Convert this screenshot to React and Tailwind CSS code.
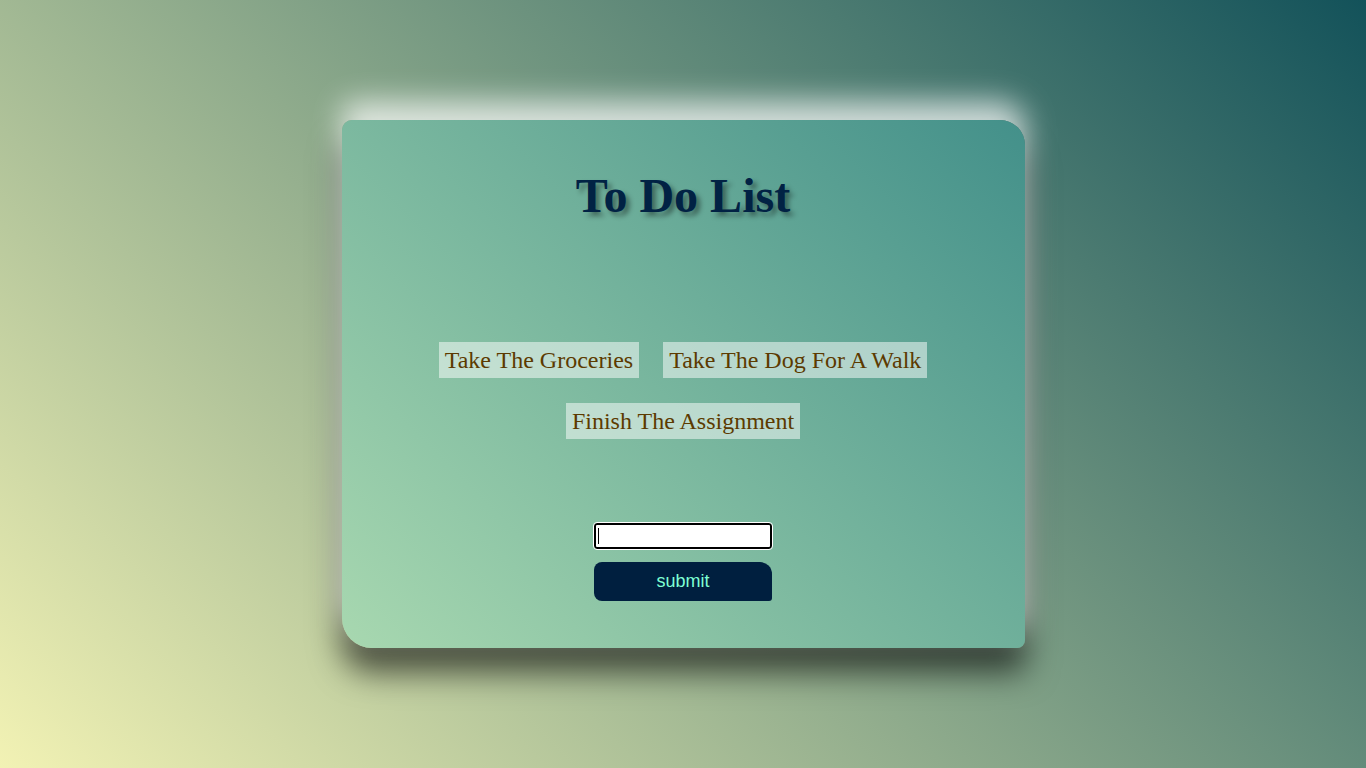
import { useState } from 'react'

const TASKS = ['Take The Groceries', 'Take The Dog For A Walk', 'Finish The Assignment']

export default function App() {
  const [tasks, setTasks] = useState(TASKS)
  const [value, setValue] = useState('')

  const addTask = (e) => {
    e.preventDefault()
    if (!value.trim()) return
    setTasks([...tasks, value.trim()])
    setValue('')
  }

  return (
    <div className="min-h-screen w-full flex justify-center items-start pt-[120px] bg-[linear-gradient(45deg,#f2f2b4,#13525a)] font-['Liberation_Serif',serif]">
      <div className="w-[683px] h-[528px] flex flex-col items-center pt-[48px] rounded-[10px_25px_8px_30px] bg-[linear-gradient(45deg,#a8d8b0,#43908a)] shadow-[0_-18px_30px_rgba(255,255,255,0.75),0_24px_32px_rgba(0,0,0,0.62)]">
        <h1 className="text-[48px] leading-[56px] font-bold text-[#012244] [text-shadow:4px_4px_5px_rgba(0,0,0,0.4)]">
          To Do List
        </h1>

        {/* task list */}
        <div className="mt-[118px] w-[500px] flex flex-wrap justify-center gap-x-[24px] gap-y-[25px]">
          {tasks.map((t, i) => (
            <span
              key={i}
              className="px-[6px] h-[36px] flex items-center text-[24px] leading-none text-[#5c3a00] bg-white/50"
            >
              {t}
            </span>
          ))}
        </div>

        <form onSubmit={addTask} className="mt-[84px] flex flex-col items-center">
          <div className="relative">
            <input
              autoFocus
              value={value}
              onChange={(e) => setValue(e.target.value)}
              className="block w-[178px] h-[26px] bg-white border-2 border-black rounded-[3px] outline outline-1 outline-white px-1 text-sm font-['Liberation_Sans',sans-serif]"
            />
            {!value && <span className="absolute left-[4px] top-[5px] w-px h-[16px] bg-black pointer-events-none" />}
          </div>
          <button
            type="submit"
            className="mt-[13px] w-[178px] h-[39px] bg-[#001f3f] text-[#7fffd4] text-[18px] font-['Liberation_Sans',sans-serif] rounded-[8px_12px_3px_8px]"
          >
            submit
          </button>
        </form>
      </div>
    </div>
  )
}
